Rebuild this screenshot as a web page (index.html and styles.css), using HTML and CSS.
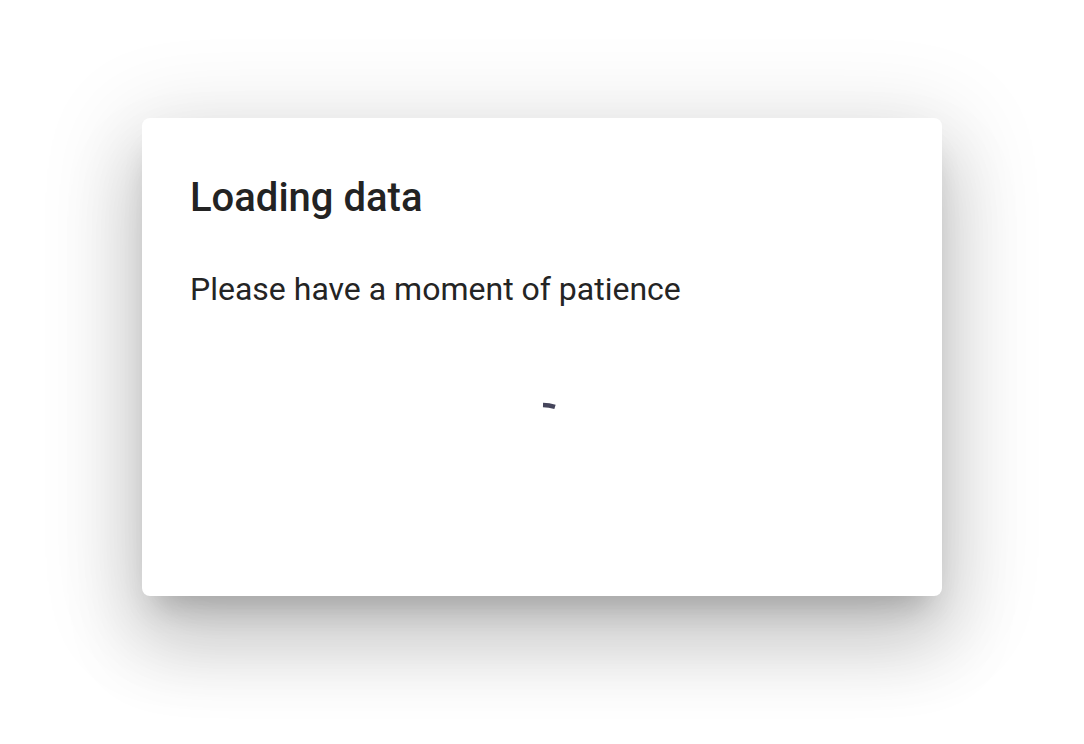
FILE: index.html
```html
<!DOCTYPE html>
<html lang="en">
<head>
    <meta charset="UTF-8">
    <meta name="viewport" content="width=device-width, initial-scale=1.0">
    <title>Loading data</title>
    <link rel="stylesheet" href="styles.css">
</head>
<body>
    <div class="overlay">
        <div class="dialog">
            <h2 class="dialog-title">Loading data</h2>
            <p class="dialog-content">Please have a moment of patience</p>
            <div class="spinner-wrap">
                <!-- spinner, caught at the start of its animation -->
                <svg class="spinner" width="100" height="100" viewBox="0 0 100 100">
                    <path d="M51 5.01 A45 45 0 0 1 63 6.92" fill="none" stroke="#45455b" stroke-width="4.5"/>
                </svg>
            </div>
        </div>
    </div>
</body>
</html>
```

FILE: styles.css
```css
body {
    font-family: Roboto, "Noto Sans", Arial, sans-serif;
    margin: 0;
    padding: 0;
    background: #fff;
    color: rgba(0, 0, 0, 0.87);
}
.overlay {
    display: flex;
    justify-content: center;
    padding-top: 118px;
    height: 744px;
    box-sizing: border-box;
}
.dialog {
    width: 800px;
    height: 478px;
    box-sizing: border-box;
    padding: 48px 48px 0;
    background: #fff;
    border-radius: 8px;
    box-shadow: 0 22px 30px -14px rgba(0, 0, 0, 0.2),
                0 48px 76px 6px rgba(0, 0, 0, 0.14),
                0 18px 92px 16px rgba(0, 0, 0, 0.12);
}
.dialog-title {
    margin: 0 0 35px;
    font-size: 40px;
    line-height: 64px;
    font-weight: 500;
    color: #232323;
}
.dialog-content {
    margin: 0;
    font-size: 32px;
    line-height: 48px;
    font-weight: 400;
    color: #242424;
}
.spinner-wrap {
    display: flex;
    justify-content: center;
    margin-top: 87px;
}
.spinner {
    display: block;
}
```
